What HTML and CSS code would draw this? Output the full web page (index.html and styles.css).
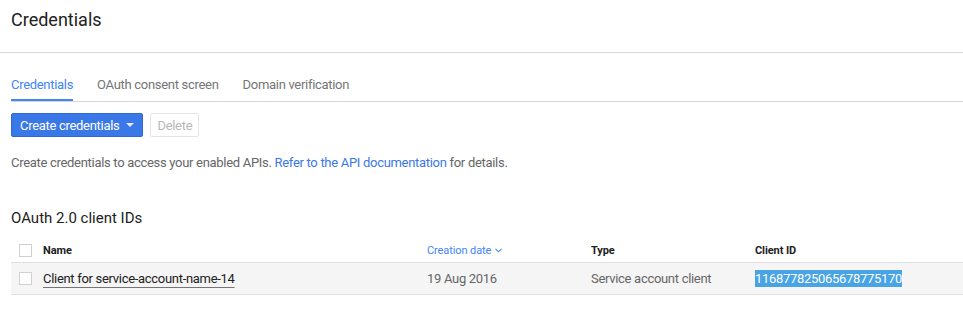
FILE: index.html
```html
<!DOCTYPE html>
<html>
<head>
<meta charset="utf-8">
<link rel="stylesheet" href="styles.css">
</head>
<body>
<header class="page-header">
  <h1 class="page-title">Credentials</h1>
</header>
<main class="content">
  <nav class="tabs">
    <a class="tab tab-active">Credentials</a>
    <a class="tab">OAuth consent screen</a>
    <a class="tab">Domain verification</a>
  </nav>
  <div class="toolbar">
    <button class="btn btn-primary">Create credentials <span class="caret"></span></button>
    <button class="btn btn-disabled">Delete</button>
  </div>
  <p class="desc">Create credentials to access your enabled APIs. <a class="link">Refer to the API documentation</a> for details.</p>
  <h2 class="section-title">OAuth 2.0 client IDs</h2>
  <div class="table">
    <div class="row row-head">
      <div class="cell cell-check"><span class="checkbox"></span></div>
      <div class="cell">Name</div>
      <div class="cell cell-sort">Creation date <svg class="sort-icon" width="7" height="5" viewBox="0 0 7 5"><path d="M0.5 0.8 L3.5 3.8 L6.5 0.8" fill="none" stroke="#4285f4" stroke-width="1.1"/></svg></div>
      <div class="cell">Type</div>
      <div class="cell">Client ID</div>
    </div>
    <div class="row row-body">
      <div class="cell cell-check"><span class="checkbox"></span></div>
      <div class="cell"><a class="name-link">Client for service-account-name-14</a></div>
      <div class="cell">19 Aug 2016</div>
      <div class="cell">Service account client</div>
      <div class="cell"><span class="selected">116877825065678775170</span></div>
    </div>
  </div>
</main>
</body>
</html>
```
FILE: styles.css
```css
* { box-sizing: border-box; }
body {
  margin: 0;
  font-family: Roboto, "Noto Sans", Arial, sans-serif;
  color: #212121;
  background: #fff;
}
.page-header {
  height: 53px;
  border-bottom: 1px solid #d6d6d6;
  padding: 8px 11px 0;
}
.page-title {
  margin: 0;
  font-size: 18px;
  font-weight: 400;
  line-height: 24px;
  color: #212121;
}
.content {
  padding: 0 0 0 11px;
}
.tabs {
  display: flex;
  gap: 24px;
  margin-top: 24px;
  border-bottom: 1px solid #d6d6d6;
}
.tab {
  font-size: 13px;
  line-height: 16px;
  letter-spacing: -0.3px;
  color: #757575;
  padding-bottom: 6px;
  border-bottom: 2px solid transparent;
}
.tab-active {
  color: #4285f4;
  border-bottom-color: #4285f4;
}
.toolbar {
  display: flex;
  gap: 7px;
  margin-top: 11px;
}
.btn {
  height: 24px;
  font-family: inherit;
  font-size: 13px;
  letter-spacing: -0.3px;
  border-radius: 2px;
  padding: 0 8px;
  display: flex;
  align-items: center;
}
.btn-primary {
  background: #3b78e7;
  border: 1px solid #3367d6;
  color: #fff;
  padding-right: 8px;
}
.caret {
  display: inline-block;
  width: 0;
  height: 0;
  border-left: 4px solid transparent;
  border-right: 4px solid transparent;
  border-top: 4px solid #fff;
  margin-left: 7px;
  opacity: 0.85;
}
.btn-disabled {
  background: #fff;
  border: 1px solid #e5e5e5;
  color: #b8b8b8;
  padding: 0 6px;
}
.desc {
  margin: 18px 0 0;
  font-size: 13px;
  line-height: 16px;
  letter-spacing: -0.3px;
  color: #666;
}
.link { color: #3b78e7; }
.section-title {
  margin: 37px 0 0;
  font-size: 15px;
  font-weight: 400;
  line-height: 20px;
  color: #212121;
}
.table {
  margin-top: 10px;
}
.row {
  display: grid;
  grid-template-columns: 32px 384px 164px 164px 1fr;
  align-items: center;
  border-bottom: 1px solid #e0e0e0;
}
.row-head {
  height: 25px;
  font-size: 11px;
  font-weight: 700;
  letter-spacing: -0.1px;
  color: #212121;
}
.row-body {
  height: 32px;
  background: #f5f5f5;
  font-size: 13px;
  letter-spacing: -0.3px;
  color: #666;
}
.cell-check {
  padding-left: 8px;
  display: flex;
}
.checkbox {
  width: 13px;
  height: 13px;
  border: 1px solid #d0d0d0;
  background: #fff;
}
.cell-sort {
  color: #4285f4;
  font-weight: 400;
  display: flex;
  align-items: center;
  gap: 4px;
}
.name-link {
  color: #212121;
  text-decoration: underline;
  text-decoration-color: #757575;
  text-underline-offset: 4px;
}
.selected {
  background: #48a4e4;
  color: #fff;
  padding: 1px 0;
}
```
